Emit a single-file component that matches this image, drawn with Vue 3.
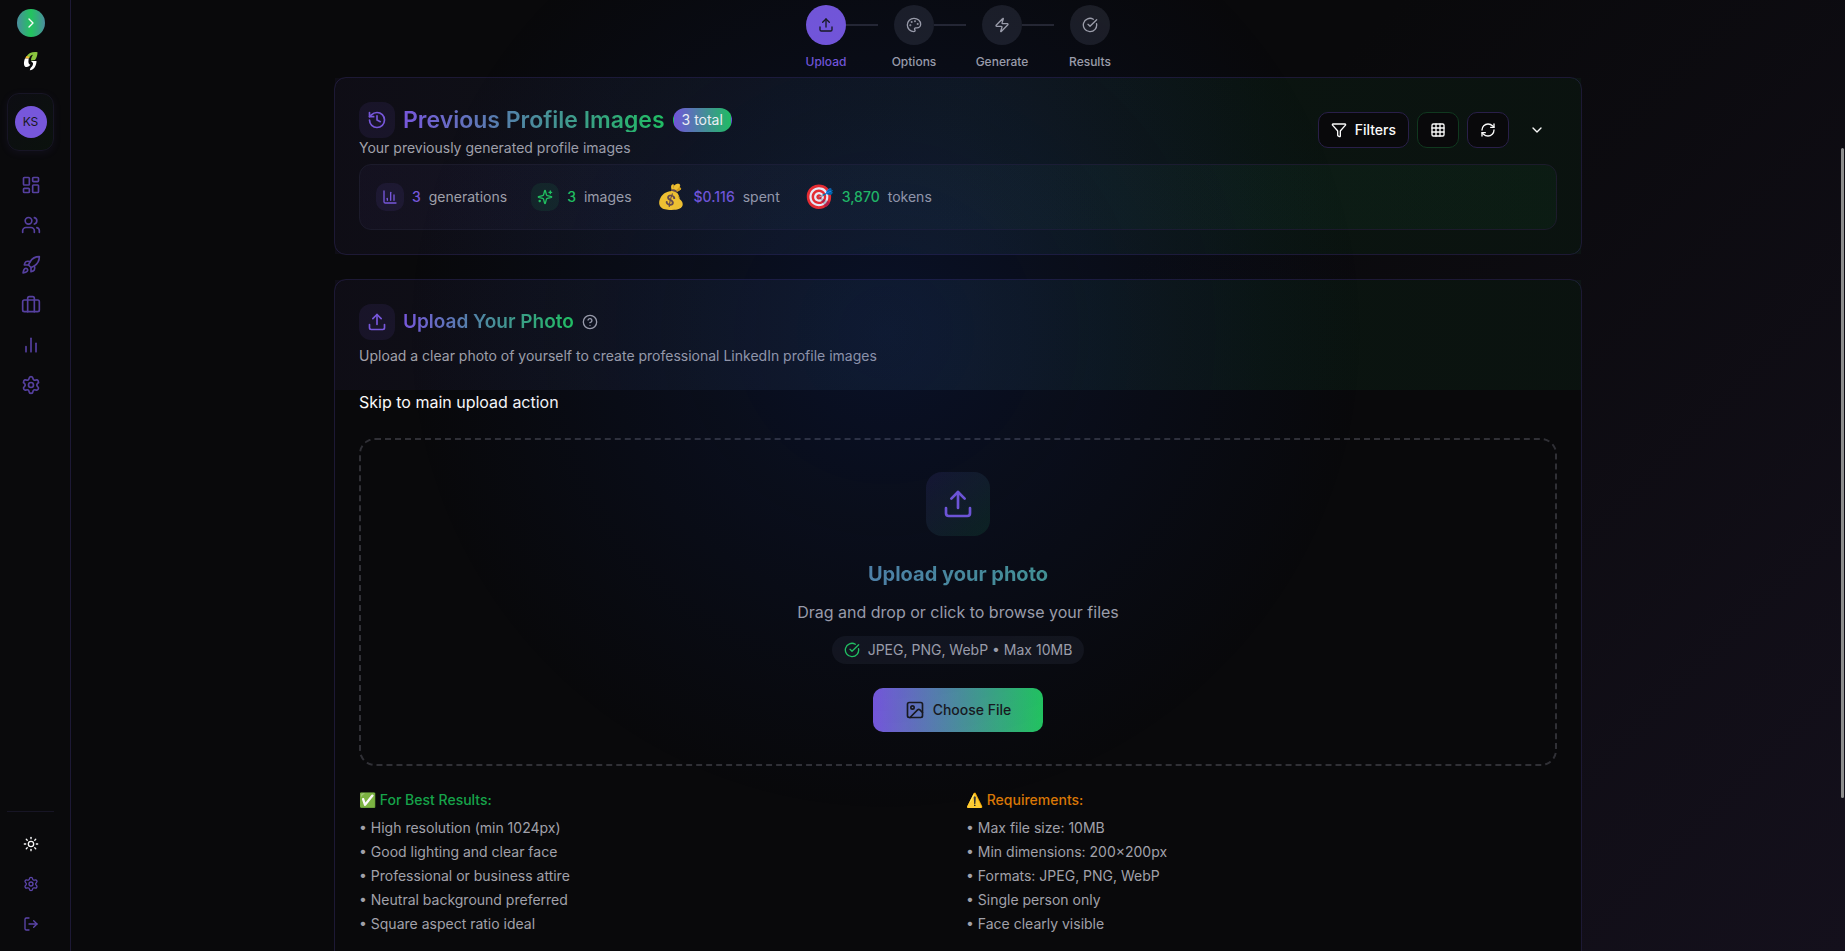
<script setup>
const icons = {
  chevronRight: '<path d="m9 18 6-6-6-6"/>',
  chevronDown: '<path d="m6 9 6 6 6-6"/>',
  dashboard: '<rect width="7" height="9" x="3" y="3" rx="1"/><rect width="7" height="5" x="14" y="3" rx="1"/><rect width="7" height="9" x="14" y="12" rx="1"/><rect width="7" height="5" x="3" y="16" rx="1"/>',
  users: '<path d="M16 21v-2a4 4 0 0 0-4-4H6a4 4 0 0 0-4 4v2"/><circle cx="9" cy="7" r="4"/><path d="M22 21v-2a4 4 0 0 0-3-3.87"/><path d="M16 3.13a4 4 0 0 1 0 7.75"/>',
  rocket: '<path d="M4.5 16.5c-1.5 1.26-2 5-2 5s3.74-.5 5-2c.71-.84.7-2.13-.09-2.91a2.18 2.18 0 0 0-2.91-.09z"/><path d="m12 15-3-3a22 22 0 0 1 2-3.95A12.88 12.88 0 0 1 22 2c0 2.72-.78 7.5-6 11a22.35 22.35 0 0 1-4 2z"/><path d="M9 12H4s.55-3.03 2-4c1.62-1.08 5 0 5 0"/><path d="M12 15v5s3.03-.55 4-2c1.08-1.62 0-5 0-5"/>',
  luggage: '<path d="M16 20V4a2 2 0 0 0-2-2h-4a2 2 0 0 0-2 2v16"/><rect width="20" height="14" x="2" y="6" rx="2"/>',
  bars: '<path d="M18 20V10"/><path d="M12 20V4"/><path d="M6 20v-6"/>',
  settings: '<path d="M9.671 4.136a2.34 2.34 0 0 1 4.659 0 2.34 2.34 0 0 0 3.319 1.915 2.34 2.34 0 0 1 2.33 4.033 2.34 2.34 0 0 0 0 3.831 2.34 2.34 0 0 1-2.33 4.033 2.34 2.34 0 0 0-3.319 1.915 2.34 2.34 0 0 1-4.659 0 2.34 2.34 0 0 0-3.32-1.915 2.34 2.34 0 0 1-2.33-4.033 2.34 2.34 0 0 0 0-3.831A2.34 2.34 0 0 1 6.35 6.051a2.34 2.34 0 0 0 3.319-1.915"/><circle cx="12" cy="12" r="3"/>',
  sun: '<circle cx="12" cy="12" r="4"/><path d="M12 2v2"/><path d="M12 20v2"/><path d="m4.93 4.93 1.41 1.41"/><path d="m17.66 17.66 1.41 1.41"/><path d="M2 12h2"/><path d="M20 12h2"/><path d="m6.34 17.66-1.41 1.41"/><path d="m19.07 4.93-1.41 1.41"/>',
  logout: '<path d="M9 21H5a2 2 0 0 1-2-2V5a2 2 0 0 1 2-2h4"/><path d="m16 17 5-5-5-5"/><path d="M21 12H9"/>',
  upload: '<path d="M21 15v4a2 2 0 0 1-2 2H5a2 2 0 0 1-2-2v-4"/><path d="m17 8-5-5-5 5"/><path d="M12 3v12"/>',
  palette: '<circle cx="13.5" cy="6.5" r=".5" fill="currentColor"/><circle cx="17.5" cy="10.5" r=".5" fill="currentColor"/><circle cx="8.5" cy="7.5" r=".5" fill="currentColor"/><circle cx="6.5" cy="12.5" r=".5" fill="currentColor"/><path d="M12 2C6.5 2 2 6.5 2 12s4.5 10 10 10c.926 0 1.648-.746 1.648-1.688 0-.437-.18-.835-.437-1.125-.29-.289-.438-.652-.438-1.125a1.64 1.64 0 0 1 1.668-1.668h1.996c3.051 0 5.555-2.503 5.555-5.554C21.965 6.012 17.461 2 12 2z"/>',
  zap: '<path d="M4 14a1 1 0 0 1-.78-1.63l9.9-10.2a.5.5 0 0 1 .86.46l-1.92 6.02A1 1 0 0 0 13 10h7a1 1 0 0 1 .78 1.63l-9.9 10.2a.5.5 0 0 1-.86-.46l1.92-6.02A1 1 0 0 0 11 14z"/>',
  check: '<path d="M21.801 10A10 10 0 1 1 17 3.335"/><path d="m9 11 3 3L22 4"/>',
  history: '<path d="M3 12a9 9 0 1 0 9-9 9.75 9.75 0 0 0-6.74 2.74L3 8"/><path d="M3 3v5h5"/><path d="M12 7v5l4 2"/>',
  chart: '<path d="M3 3v16a2 2 0 0 0 2 2h16"/><path d="M18 17V9"/><path d="M13 17V5"/><path d="M8 17v-3"/>',
  sparkles: '<path d="M9.937 15.5A2 2 0 0 0 8.5 14.063l-6.135-1.582a.5.5 0 0 1 0-.962L8.5 9.936A2 2 0 0 0 9.937 8.5l1.582-6.135a.5.5 0 0 1 .963 0L14.063 8.5A2 2 0 0 0 15.5 9.937l6.135 1.581a.5.5 0 0 1 0 .964L15.5 14.063a2 2 0 0 0-1.437 1.437l-1.582 6.135a.5.5 0 0 1-.963 0z"/><path d="M20 3v4"/><path d="M22 5h-4"/><path d="M4 17v2"/><path d="M5 18H3"/>',
  filter: '<path d="M10 20a1 1 0 0 0 .553.895l2 1A1 1 0 0 0 14 21v-7a2 2 0 0 1 .517-1.341L21.74 4.67A1 1 0 0 0 21 3H3a1 1 0 0 0-.742 1.67l7.225 7.989A2 2 0 0 1 10 14z"/>',
  grid: '<rect width="18" height="18" x="3" y="3" rx="2"/><path d="M3 9h18"/><path d="M3 15h18"/><path d="M9 3v18"/><path d="M15 3v18"/>',
  refresh: '<path d="M3 12a9 9 0 0 1 9-9 9.75 9.75 0 0 1 6.74 2.74L21 8"/><path d="M21 3v5h-5"/><path d="M21 12a9 9 0 0 1-9 9 9.75 9.75 0 0 1-6.74-2.74L3 16"/><path d="M8 16H3v5"/>',
  help: '<circle cx="12" cy="12" r="10"/><path d="M9.09 9a3 3 0 0 1 5.83 1c0 2-3 3-3 3"/><path d="M12 17h.01"/>',
  image: '<rect width="18" height="18" x="3" y="3" rx="2"/><circle cx="9" cy="9" r="2"/><path d="m21 15-3.086-3.086a2 2 0 0 0-2.828 0L6 21"/>',
}

const Icon = (props) => {
  return h('svg', {
    viewBox: '0 0 24 24', width: props.size, height: props.size, fill: 'none',
    stroke: 'currentColor', 'stroke-width': 2, 'stroke-linecap': 'round',
    'stroke-linejoin': 'round', 'aria-hidden': 'true', innerHTML: icons[props.name],
  })
}
Icon.props = ['name', 'size']

const nav = [
  ['Dashboard', 'dashboard'], ['People', 'users'], ['Launch', 'rocket'],
  ['Portfolio', 'luggage'], ['Analytics', 'bars'], ['Settings', 'settings'],
]
const steps = [
  ['Upload', 'upload'], ['Options', 'palette'], ['Generate', 'zap'], ['Results', 'check'],
]
const tips = [
  {
    title: '✅ For Best Results:', tone: 'good',
    items: ['High resolution (min 1024px)', 'Good lighting and clear face', 'Professional or business attire', 'Neutral background preferred', 'Square aspect ratio ideal'],
  },
  {
    title: '⚠️ Requirements:', tone: 'warn',
    items: ['Max file size: 10MB', 'Min dimensions: 200×200px', 'Formats: JPEG, PNG, WebP', 'Single person only', 'Face clearly visible'],
  },
]
</script>

<script>
import { h } from 'vue'
</script>

<template>
  <div class="app">
    <aside class="sidebar">
      <button class="toggle" aria-label="Expand sidebar"><Icon name="chevronRight" :size="16" /></button>
      <svg class="logo" viewBox="0 0 32 32" width="32" height="32" aria-hidden="true">
        <path d="M22.500 7.300C18 6.500 13.500 8 11.500 11.500L14 13.500C15 11 16.500 10 18 9.800C16.500 12 16 13.500 16 15.500L20 15C21.800 13 22.500 10 22.500 7.300Z" fill="#8bc53f" />
        <path d="M11.500 11L10 13.500H13.700L14.500 12Z" fill="#f5b82e" />
        <path d="M10 13.500C8.500 17 8.500 21.500 11 22C13 22.300 14.800 21 15.300 19.500C13.600 19.500 13 17.500 13.700 13.500Z" fill="#fff" />
        <path d="M16 16H21.500C21.500 20 19.500 25 14.800 25.300L15.500 23C17.500 21.500 18.200 19.500 18 18Z" fill="#fff" />
      </svg>
      <div class="profile"><span class="avatar">KS</span></div>
      <nav class="nav" aria-label="Main">
        <a v-for="[label, icon] in nav" :key="label" href="#" :aria-label="label"><Icon :name="icon" :size="20" /></a>
      </nav>
      <div class="side-foot">
        <button class="theme" aria-label="Toggle theme"><Icon name="sun" :size="16" /></button>
        <button aria-label="Preferences"><Icon name="settings" :size="16" /></button>
        <button aria-label="Sign out"><Icon name="logout" :size="16" /></button>
      </div>
    </aside>

    <main class="main">
      <ol class="steps">
        <li v-for="([label, icon], i) in steps" :key="label" :class="{ active: i === 0 }">
          <span class="dot"><Icon :name="icon" :size="16" /></span>
          <span class="step-label">{{ label }}</span>
        </li>
      </ol>

      <section class="card">
        <div class="card-head">
          <div class="head-row">
            <div>
              <div class="title-row">
                <span class="icon-box"><Icon name="history" :size="20" /></span>
                <h2 class="title large">Previous Profile Images</h2>
                <span class="badge">3 total</span>
              </div>
              <p class="sub">Your previously generated profile images</p>
            </div>
            <div class="actions">
              <button class="btn filters"><Icon name="filter" :size="16" />Filters</button>
              <button class="btn green" aria-label="Grid view"><Icon name="grid" :size="16" /></button>
              <button class="btn" aria-label="Refresh"><Icon name="refresh" :size="16" /></button>
              <button class="btn ghost" aria-label="Expand"><Icon name="chevronDown" :size="16" /></button>
            </div>
          </div>
          <div class="stats">
            <div class="stat"><span class="chip"><Icon name="chart" :size="16" /></span><b>3</b><span>generations</span></div>
            <div class="stat alt"><span class="chip"><Icon name="sparkles" :size="16" /></span><b>3</b><span>images</span></div>
            <div class="stat"><span class="emoji">💰</span><b>$0.116</b><span>spent</span></div>
            <div class="stat alt"><span class="emoji">🎯</span><b>3,870</b><span>tokens</span></div>
          </div>
        </div>
      </section>

      <section class="card">
        <div class="card-head">
          <div class="title-row">
            <span class="icon-box"><Icon name="upload" :size="20" /></span>
            <h2 class="title">Upload Your Photo</h2>
            <button class="help" aria-label="Help"><Icon name="help" :size="16" /></button>
          </div>
          <p class="sub">Upload a clear photo of yourself to create professional LinkedIn profile images</p>
        </div>
        <div class="card-body">
          <a class="skip" href="#upload">Skip to main upload action</a>
          <div id="upload" class="dropzone">
            <span class="drop-icon"><Icon name="upload" :size="32" /></span>
            <h3>Upload your photo</h3>
            <p class="drop-text">Drag and drop or click to browse your files</p>
            <p class="formats"><Icon name="check" :size="16" />JPEG, PNG, WebP • Max 10MB</p>
            <button class="choose"><Icon name="image" :size="20" />Choose File</button>
          </div>
          <div class="tips">
            <div v-for="t in tips" :key="t.title">
              <h4 :class="t.tone">{{ t.title }}</h4>
              <ul>
                <li v-for="item in t.items" :key="item">• {{ item }}</li>
              </ul>
            </div>
          </div>
        </div>
      </section>
    </main>
    <div class="glow"></div>
    <div class="scrollbar"></div>
  </div>
</template>

<style>
body {
  margin: 0;
  background: #09090b;
  overflow: hidden;
}
</style>

<style scoped>
* { box-sizing: border-box; }
h2, h3, h4, p, ul, ol { margin: 0; padding: 0; }
ul, ol { list-style: none; }
button { font: inherit; color: inherit; background: none; border: 0; padding: 0; cursor: pointer; }
a { color: inherit; text-decoration: none; }
svg { display: block; flex: none; }

.app {
  --purple: #7757db;
  --green: #22c55e;
  --line: #1d1935;
  --muted: #a1a1aa;
  display: flex;
  height: 100vh;
  overflow: hidden;
  color: #fafafa;
  font: 14px/20px Inter, "Noto Sans", sans-serif;
  background: linear-gradient(135deg, #09090b 0%, #09090b 50%, #14101c 100%);
}

.sidebar {
  flex: none;
  width: 71px;
  padding: 9px 16px 7px 7px;
  display: flex;
  flex-direction: column;
  align-items: center;
  background: #0a0a0c;
  border-right: 1px solid var(--line);
}
.toggle {
  width: 28px;
  height: 28px;
  border-radius: 50%;
  display: grid;
  place-items: center;
  background: linear-gradient(90deg, #4b8d9f, #22c55e 50%, #4b8d9f);
}
.logo { margin: 8px 0 16px; }
.profile {
  width: 47px;
  height: 58px;
  border: 1px solid #171525;
  border-radius: 12px;
  display: grid;
  place-items: center;
  background: linear-gradient(135deg, #0d0d13, #0b120d);
  box-shadow: 0 2px 8px rgba(119, 87, 219, 0.08);
}
.avatar {
  width: 32px;
  height: 32px;
  border-radius: 50%;
  background: var(--purple);
  color: #18181b;
  font-size: 12px;
  line-height: 32px;
  text-align: center;
}
.nav { margin-top: 14px; color: #5640a0; }
.nav a { width: 40px; height: 40px; display: grid; place-items: center; }
.side-foot {
  margin-top: auto;
  width: 47px;
  padding-top: 12px;
  border-top: 1px solid #171525;
  color: #5c45ab;
}
.side-foot button { width: 100%; height: 40px; display: grid; place-items: center; }
.side-foot .theme { color: #fafafa; }

.main {
  flex: 1;
  min-width: 0;
  max-width: 1280px;
  margin: 0 auto;
  padding: 5px 16px 0;
}
.steps { display: flex; justify-content: center; gap: 48px; height: 72px; }
.steps li { position: relative; width: 40px; display: flex; flex-direction: column; align-items: center; color: var(--muted); }
.steps li:not(:last-child)::after {
  content: "";
  position: absolute;
  left: 40px;
  top: 19px;
  width: 32px;
  height: 2px;
  background: #26262e;
}
.dot { width: 40px; height: 40px; border-radius: 50%; display: grid; place-items: center; background: #1c1d23; }
.active .dot { background: var(--purple); color: #18181b; }
.step-label { margin-top: 8px; font-size: 12px; line-height: 18px; font-weight: 500; }
.steps .active .step-label { color: var(--purple); }

.card { border: 1px solid var(--line); border-radius: 12px; background: #09090b; margin-bottom: 24px; }
.card-head {
  padding: 24px;
  background: linear-gradient(90deg, rgba(119, 87, 219, 0.05), rgba(70, 130, 160, 0.1) 50%, rgba(34, 197, 94, 0.06) 75%, rgba(34, 197, 94, 0.05));
}
.head-row { display: flex; justify-content: space-between; align-items: center; }
.title-row { display: flex; align-items: center; gap: 8px; }
.icon-box {
  width: 36px;
  height: 36px;
  border-radius: 12px;
  display: grid;
  place-items: center;
  color: var(--purple);
  background: rgba(119, 87, 219, 0.1);
}
.title {
  font-size: 19px;
  line-height: 28px;
  font-weight: 600;
  color: transparent;
  background: linear-gradient(90deg, var(--purple), var(--green));
  -webkit-background-clip: text;
  background-clip: text;
}
.title.large { font-size: 23px; line-height: 24px; }
.badge {
  height: 24px;
  padding: 0 8px;
  border: 1px solid transparent;
  border-radius: 12px;
  line-height: 22px;
  background: linear-gradient(90deg, var(--purple), var(--green));
}
.sub { color: var(--muted); }
.title-row + .sub { margin-top: 6px; }
.head-row .sub { margin-top: 0; }
.actions { display: flex; gap: 8px; }
.btn {
  height: 36px;
  width: 42px;
  border: 1px solid #291f49;
  border-radius: 10px;
  background: #09090b;
  display: flex;
  align-items: center;
  justify-content: center;
  gap: 8px;
  font-weight: 500;
}
.btn.filters { width: auto; padding: 0 12px; }
.btn.green { border-color: #10381f; }
.btn.ghost { width: 40px; border: 0; background: none; }
.stats {
  margin-top: 6px;
  padding: 16px;
  border: 1px solid #1c1b2b;
  border-radius: 12px;
  display: flex;
  flex-wrap: wrap;
  gap: 24px;
  background: linear-gradient(90deg, rgba(119, 87, 219, 0.05), rgba(34, 197, 94, 0.05));
}
.stat { display: flex; align-items: center; gap: 8px; color: var(--muted); }
.stat b { font-weight: 500; color: var(--purple); }
.stat.alt b, .stat.alt .chip { color: var(--green); }
.chip { padding: 6px; border-radius: 10px; color: var(--purple); background: rgba(119, 87, 219, 0.1); }
.stat.alt .chip { background: rgba(34, 197, 94, 0.1); }
.emoji { font-size: 24px; line-height: 32px; color: #fff; }
.help { color: var(--muted); }

.card-body { padding: 0 24px 24px; }
.skip { display: block; font-size: 16px; line-height: 24px; }
.dropzone {
  margin: 24px 0;
  padding: 32px;
  border: 2px dashed #303036;
  border-radius: 16px;
  display: flex;
  flex-direction: column;
  align-items: center;
}
.drop-icon {
  padding: 16px;
  border-radius: 16px;
  color: var(--purple);
  background: linear-gradient(135deg, rgba(119, 87, 219, 0.12), rgba(34, 197, 94, 0.12));
}
.dropzone h3 {
  align-self: stretch;
  margin: 24px 0 12px;
  text-align: center;
  font-size: 20px;
  line-height: 28px;
  font-weight: 700;
  color: transparent;
  background: linear-gradient(90deg, var(--purple), var(--green));
  -webkit-background-clip: text;
  background-clip: text;
}
.drop-text { font-size: 16px; line-height: 24px; color: var(--muted); }
.formats {
  margin: 12px 0 24px;
  padding: 4px 12px;
  border-radius: 14px;
  display: flex;
  align-items: center;
  gap: 8px;
  color: var(--muted);
  background: #131419;
}
.formats svg { color: var(--green); }
.choose {
  height: 44px;
  padding: 0 32px;
  border-radius: 10px;
  display: flex;
  align-items: center;
  gap: 8px;
  font-weight: 500;
  color: #18181b;
  background: linear-gradient(90deg, var(--purple), var(--green));
}
.tips { display: grid; grid-template-columns: 1fr 1fr; gap: 16px; color: var(--muted); }
.tips h4 { font-weight: 500; margin-bottom: 8px; }
.tips li { margin-bottom: 4px; }
.good { color: #16a34a; }
.warn { color: #d97706; }

.glow {
  position: fixed;
  inset: 0;
  pointer-events: none;
  background: radial-gradient(circle 480px at 48% 35%, rgba(16, 60, 180, 0.17), rgba(16, 60, 180, 0.08) 50%, rgba(16, 60, 180, 0));
}
.scrollbar {
  position: fixed;
  right: 1px;
  top: 148px;
  width: 3px;
  height: 650px;
  border-radius: 2px;
  background: #8e8e8e;
}
</style>
